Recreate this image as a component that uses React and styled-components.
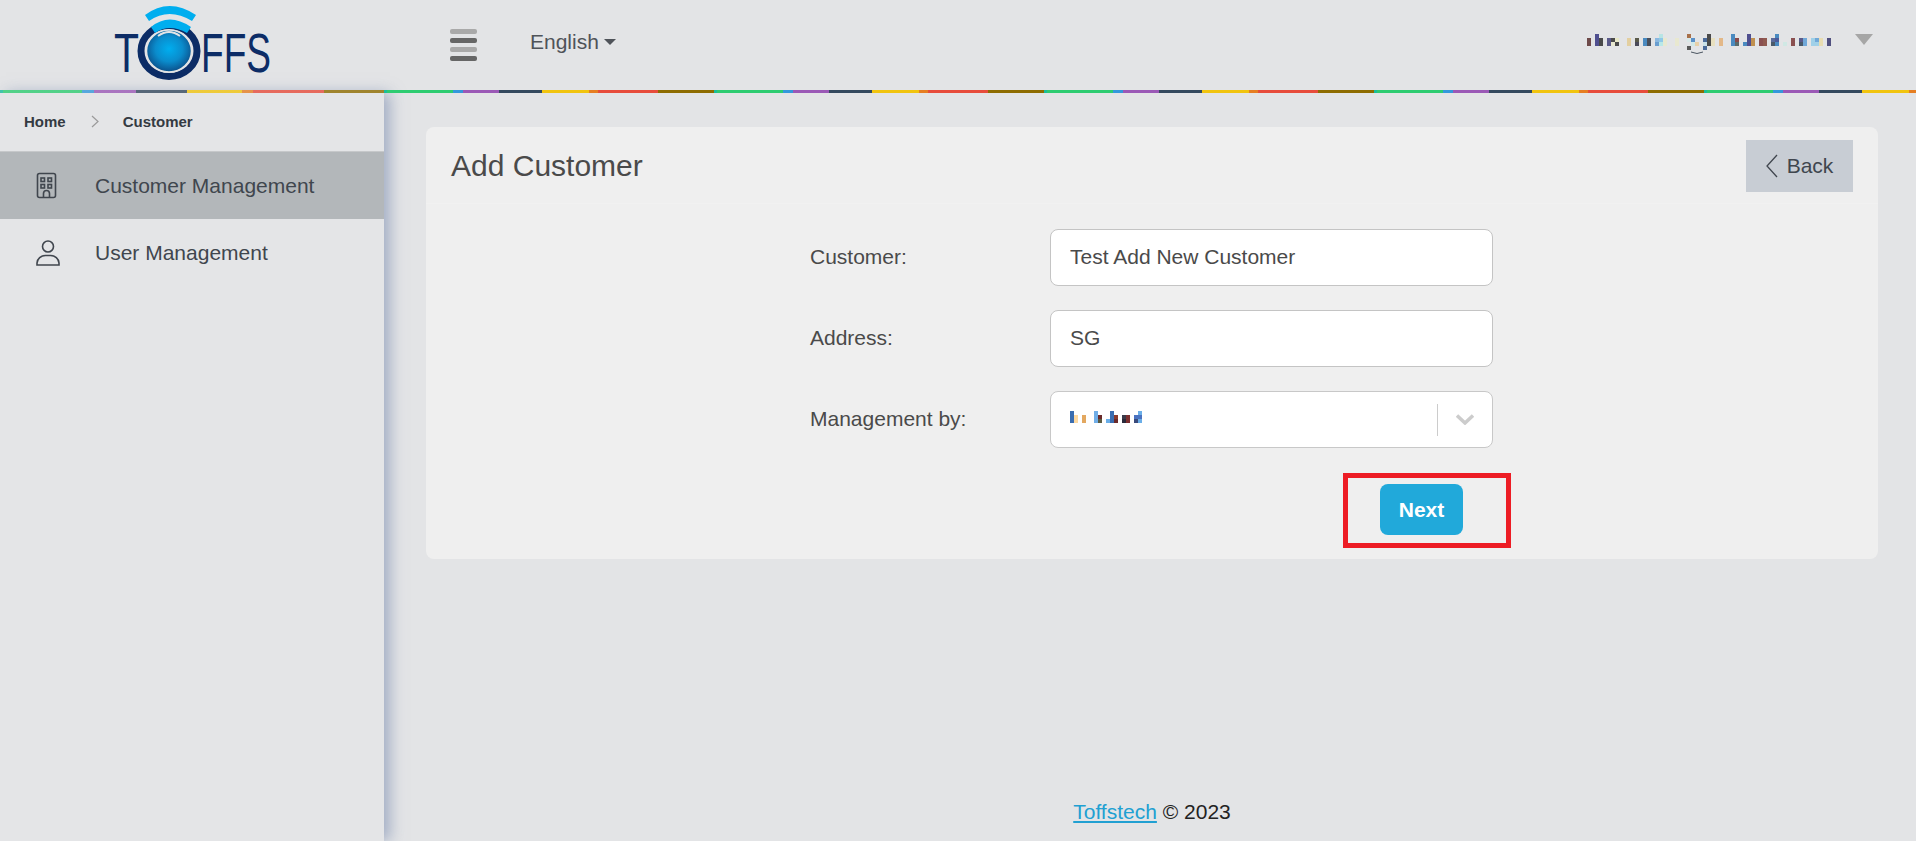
import styled, { createGlobalStyle } from 'styled-components'

const GlobalStyle = createGlobalStyle`
   html, body { margin: 0; padding: 0; height: 100%; }
   body {
      background: #e3e4e6;
      color: #4a4a4a;
      font-family: "Liberation Sans", Arial, sans-serif;
      font-size: 21px;
   }
   #root { height: 100%; }
`

const stripe = `linear-gradient(to right,
   #1abc9c 0 3px, #2ecc71 3px 69px, #3498db 69px 79px, #9b59b6 79px 115px,
   #34495e 115px 158px, #f1c40f 158px 205px, #e67e22 205px 214px,
   #e74c3c 214px 274px, #8e6c00 274px 330px)`

const brandStripe = `linear-gradient(to right,
   #1abc9c 0 3px, #2ecc71 3px 82px, #3498db 82px 94px, #9b59b6 94px 136px,
   #34495e 136px 187px, #f1c40f 187px 242px, #e67e22 242px 253px,
   #e74c3c 253px 324px, #8e6c00 324px 384px)`

const USER_CELLS = [
   [0, 1, '#6e4a4a'], [0, 2, '#6e4a4a'], [2, 0, '#4f4f8f'], [2, 1, '#4f4f8f'], [2, 2, '#4f4f8f'],
   [3, 1, '#4a4a4a'], [3, 2, '#4a4a4a'], [5, 1, '#5a5a8a'], [5, 2, '#5a5a8a'], [6, 1, '#4a4a4a'],
   [6, 2, '#e8e8d0'], [7, 1, '#e8e8c8'], [7, 2, '#4a4a4a'], [10, 1, '#e3cfa0'], [10, 2, '#e3cfa0'],
   [12, 1, '#5a5a4a'], [12, 2, '#4a4a5a'], [14, 1, '#4a8ac0'], [14, 2, '#4a8ac0'], [15, 1, '#4a4f5a'],
   [15, 2, '#4a4f5a'], [17, 1, '#8ab8e0'], [17, 2, '#6a9ed0'], [18, 0, '#b8e4e4'], [18, 1, '#90c8e8'],
   [18, 2, '#b8e8e8'], [19, 1, '#e8e8d0'], [19, 2, '#e8e8d0'], [22, 1, '#e8e8d0'], [22, 2, '#e8e8d0'],
   [25, 0, '#a8704a'], [25, 1, '#d8e8e8'], [25, 3, '#5a5a5a'], [26, 1, '#5a90c8'], [26, 2, '#d0e8e8'],
   [27, 2, '#e8d0a8'], [29, 1, '#4a6a9a'], [29, 2, '#c8e0e8'], [29, 3, '#4a6a9a'], [30, 0, '#4a4a4a'],
   [30, 1, '#4a4a4a'], [30, 2, '#4a4a4a'], [31, 1, '#e8e0c0'], [31, 2, '#e8e0c0'], [33, 1, '#e3b888'],
   [33, 2, '#e3b888'], [36, 0, '#4a8ac0'], [36, 1, '#4a8ac0'], [36, 2, '#4a8ac0'], [37, 1, '#8a4a4a'],
   [37, 2, '#5a6a6a'], [39, 2, '#4a8ac0'], [40, 0, '#4f4f8f'], [40, 1, '#4f4f8f'], [40, 2, '#4f4f8f'],
   [41, 1, '#c09050'], [41, 2, '#c09050'], [43, 1, '#8a5050'], [43, 2, '#8a5050'], [44, 1, '#905a50'],
   [44, 2, '#905a50'], [46, 1, '#5a6a9a'], [46, 2, '#4a5a6a'], [47, 0, '#4a8ac0'], [47, 1, '#4a5a9a'],
   [47, 2, '#4a8ac0'], [49, 2, '#d0e8e4'], [51, 1, '#8a5050'], [51, 2, '#8a5050'], [53, 1, '#5a5a8a'],
   [53, 2, '#4a5a6a'], [54, 1, '#70a8d8'], [54, 2, '#70a8d8'], [56, 1, '#a0d0e8'], [56, 2, '#a0d0e8'],
   [57, 1, '#70a8d8'], [57, 2, '#a0d0e8'], [58, 1, '#e8dcb0'], [58, 2, '#e8dcb0'], [60, 1, '#50507f'],
   [60, 2, '#50507f'],
]

const SELECT_CELLS = [
   [1, 0, '#3a6db0'], [1, 1, '#3a6db0'], [1, 2, '#3a6db0'], [2, 1, '#fdd8a0'], [2, 2, '#fdd8a0'],
   [4, 1, '#e3a860'], [4, 2, '#e3a860'], [7, 0, '#70aee8'], [7, 1, '#70aee8'], [7, 2, '#70aee8'],
   [8, 1, '#6a2a2a'], [8, 2, '#5a5a40'], [10, 2, '#6aaee8'], [11, 0, '#3a6db0'], [11, 1, '#3a6db0'],
   [11, 2, '#3a6db0'], [12, 1, '#8a3a2a'], [12, 2, '#6a2a2a'], [14, 1, '#3a3a4a'], [14, 2, '#2a2a3a'],
   [15, 1, '#7a2f2f'], [15, 2, '#7a2f2f'], [17, 1, '#4a72c0'], [17, 2, '#3a4a7a'], [18, 0, '#6aaee8'],
   [18, 1, '#4a72c0'], [18, 2, '#6aaee8'],
]

const Mosaic = ({ cells, width, height, children }) => (
   <svg width={width} height={height} viewBox={`0 0 ${width} ${height}`}>
      {cells.map(([x, y, fill]) => (
         <rect key={`${x}-${y}`} x={x * 4} y={y * 4} width='4' height='4' fill={fill} />
      ))}
      {children}
   </svg>
)

const Logo = () => (
   <svg width='230' height='90' viewBox='0 0 230 90'>
      <defs>
         <radialGradient id='lens' cx='50%' cy='45%' r='55%'>
            <stop offset='0%' stopColor='#00aeef' />
            <stop offset='55%' stopColor='#0a8ccc' />
            <stop offset='100%' stopColor='#0b4f8a' />
         </radialGradient>
      </defs>
      <text x='14' y='72' fontFamily='Liberation Sans' fontSize='55' fill='#0c2c66' textLength='25' lengthAdjust='spacingAndGlyphs'>T</text>
      <text x='101' y='72' fontFamily='Liberation Sans' fontSize='55' fill='#0c2c66' textLength='70' lengthAdjust='spacingAndGlyphs'>FFS</text>
      <ellipse cx='69' cy='51' rx='28' ry='25.5' fill='none' stroke='#0c2c66' strokeWidth='7' />
      <ellipse cx='69' cy='51' rx='22.5' ry='21' fill='url(#lens)' stroke='#e3e4e6' strokeWidth='1.5' />
      <path d='M51 27 Q69 12 91 27 L87 33 Q69 23 55 33 Z' fill='#00aeef' />
      <path d='M45 15 Q69 -3 96 15 L92 21 Q69 7 49 21 Z' fill='#00aeef' />
      <path d='M58 36 Q69 28 80 36' fill='none' stroke='#e3e4e6' strokeWidth='2' />
   </svg>
)

const BuildingIcon = () => (
   <svg width='22' height='28' viewBox='0 0 22 28' fill='none' stroke='#40464e' strokeWidth='1.6'>
      <rect x='1.5' y='1.5' width='18' height='24' rx='2' />
      <rect x='5' y='6' width='3.5' height='3.5' />
      <rect x='12' y='6' width='3.5' height='3.5' />
      <rect x='5' y='12.5' width='3.5' height='3.5' />
      <rect x='12' y='12.5' width='3.5' height='3.5' />
      <path d='M7.5 25.5 V21.5 a3 3 0 0 1 6 0 V25.5' />
   </svg>
)

const UserIcon = () => (
   <svg width='24' height='28' viewBox='0 0 24 28' fill='none' stroke='#40464e' strokeWidth='1.6'>
      <circle cx='12' cy='7.5' r='5.5' />
      <path d='M1 26 V24 a8.5 8 0 0 1 8.5 -7.5 h5 a8.5 8 0 0 1 8.5 7.5 V26 Z' />
   </svg>
)

const App = () => {
   return (
      <Page>
         <GlobalStyle />
         <Header>
            <Brand><Logo /></Brand>
            <Burger aria-label='menu'>
               <i /><i /><i /><i />
            </Burger>
            <Language>English<Caret /></Language>
            <UserArea>
               <Mosaic cells={USER_CELLS} width={244} height={20}>
                  <path d='M104 18 Q110 21 116 18' fill='none' stroke='#4a5560' strokeWidth='1' />
               </Mosaic>
               <UserCaret />
            </UserArea>
         </Header>
         <Stripes>
            <BrandStripe />
            <MainStripe />
         </Stripes>
         <Body>
            <Sidebar>
               <Breadcrumb>
                  <span>Home</span>
                  <Crumb>
                     <svg width='8' height='13' viewBox='0 0 8 13' fill='none' stroke='#9a9a9a' strokeWidth='1.2'>
                        <path d='M1 1 L7 6.5 L1 12' />
                     </svg>
                  </Crumb>
                  <span>Customer</span>
               </Breadcrumb>
               <NavItem $active>
                  <NavIcon><BuildingIcon /></NavIcon>
                  Customer Management
               </NavItem>
               <NavItem>
                  <NavIcon><UserIcon /></NavIcon>
                  User Management
               </NavItem>
            </Sidebar>
            <Main>
               <Card>
                  <CardHeader>
                     <Title>Add Customer</Title>
                     <BackButton>
                        <svg width='12' height='24' viewBox='0 0 12 24' fill='none' stroke='#40464e' strokeWidth='1.3'>
                           <path d='M11 1 L1 12 L11 23' />
                        </svg>
                        Back
                     </BackButton>
                  </CardHeader>
                  <Form>
                     <Row>
                        <Label>Customer:</Label>
                        <Input readOnly value='Test Add New Customer' />
                     </Row>
                     <Row>
                        <Label>Address:</Label>
                        <Input readOnly value='SG' />
                     </Row>
                     <Row>
                        <Label>Management by:</Label>
                        <SelectBox>
                           <SelectValue>
                              <Mosaic cells={SELECT_CELLS} width={80} height={12} />
                           </SelectValue>
                           <SelectArrow>
                              <svg width='18' height='11' viewBox='0 0 18 11' fill='none' stroke='#cccccc' strokeWidth='3.5'>
                                 <path d='M1 1.5 L9 9 L17 1.5' />
                              </svg>
                           </SelectArrow>
                        </SelectBox>
                     </Row>
                     <Actions>
                        <NextButton>Next</NextButton>
                        <Highlight />
                     </Actions>
                  </Form>
               </Card>
               <Footer><FooterLink href='#'>Toffstech</FooterLink> © 2023</Footer>
            </Main>
         </Body>
      </Page>
   )
}

export default App

const Page = styled.div`
   height: 100vh;
   display: flex;
   flex-direction: column;
   overflow: hidden;
`

const Header = styled.header`
   height: 90px;
   flex: none;
   display: flex;
   align-items: center;
`

const Brand = styled.div`
   width: 384px;
   height: 90px;
   flex: none;
   padding-left: 100px;
   box-sizing: border-box;
   svg { display: block; }
`

const Burger = styled.div`
   width: 27px;
   margin-left: 66px;
   display: flex;
   flex-direction: column;
   gap: 4px;
   i {
      display: block;
      height: 5px;
      border-radius: 2px;
      background: #a9a9a9;
   }
   i:nth-child(even) { background: #666; }
`

const Language = styled.div`
   margin: -7px 0 0 53px;
   display: flex;
   align-items: center;
   gap: 5px;
   color: #4f5359;
`

const Caret = styled.span`
   width: 0;
   height: 0;
   border-left: 6px solid transparent;
   border-right: 6px solid transparent;
   border-top: 6px solid #4f5359;
`

const UserArea = styled.div`
   margin: -2px 43px 0 auto;
   display: flex;
   align-items: flex-start;
   gap: 24px;
   height: 20px;
   svg { display: block; }
`

const UserCaret = styled.span`
   width: 0;
   height: 0;
   border-left: 9px solid transparent;
   border-right: 9px solid transparent;
   border-top: 11px solid #a6a6a6;
`

const Stripes = styled.div`
   flex: none;
   height: 3px;
   display: flex;
   position: relative;
   z-index: 1;
   background: #e3e4e6;
`

const BrandStripe = styled.div`
   width: 384px;
   flex: none;
   background: ${brandStripe};
   opacity: 0.8;
`

const MainStripe = styled.div`
   flex: 1;
   background: ${stripe};
   background-size: 330px 100%;
`

const Body = styled.div`
   flex: 1;
   display: flex;
   min-height: 0;
`

const Sidebar = styled.aside`
   width: 384px;
   flex: none;
   background: #e4e5e7;
   box-shadow: 6px 0 14px rgba(120, 138, 175, 0.6);
   position: relative;
   color: #40464e;
`

const Breadcrumb = styled.div`
   height: 58px;
   box-sizing: border-box;
   padding: 0 0 1px 24px;
   display: flex;
   align-items: center;
   font-size: 15px;
   font-weight: 700;
   color: #343a42;
`

const Crumb = styled.span`
   margin: 0 24px 0 25px;
   display: flex;
`

const NavItem = styled.div`
   height: 68px;
   display: flex;
   align-items: center;
   background: ${(p) => (p.$active ? '#b3b7ba' : 'transparent')};
   border-top: ${(p) => (p.$active ? '1px solid #c6c8ca' : 'none')};
   box-sizing: border-box;
`

const NavIcon = styled.span`
   width: 95px;
   flex: none;
   padding-left: 36px;
   box-sizing: border-box;
   display: flex;
`

const Main = styled.main`
   flex: 1;
   min-width: 0;
   padding: 34px 38px 0 42px;
   display: flex;
   flex-direction: column;
`

const Card = styled.section`
   background: #efefef;
   border-radius: 8px;
`

const CardHeader = styled.div`
   height: 77px;
   box-sizing: border-box;
   padding: 13px 25px 0 25px;
   display: flex;
   justify-content: space-between;
   align-items: flex-start;
   border-bottom: 1px solid #f1f1f1;
`

const Title = styled.h2`
   margin: 9px 0 0;
   font-size: 30px;
   font-weight: 400;
   line-height: 34px;
   color: #4a4a4a;
`

const BackButton = styled.button`
   width: 107px;
   height: 52px;
   border: 0;
   padding: 0;
   display: flex;
   align-items: center;
   justify-content: center;
   gap: 9px;
   background: #c8cdd4;
   color: #40464e;
   font: inherit;
`

const Form = styled.form`
   padding: 25px 0 24px 384px;
   display: flex;
   flex-direction: column;
   gap: 24px;
`

const Row = styled.div`
   display: flex;
   align-items: center;
`

const Label = styled.label`
   width: 240px;
   flex: none;
   padding-bottom: 2px;
   color: #4a4a4a;
`

const Input = styled.input`
   width: 443px;
   height: 57px;
   box-sizing: border-box;
   border: 1px solid #c4c4c4;
   border-radius: 8px;
   background: #fff;
   padding: 0 19px 2px;
   font: inherit;
   color: #4a4a4a;
   outline: none;
`

const SelectBox = styled.div`
   width: 443px;
   height: 57px;
   box-sizing: border-box;
   border: 1px solid #c8c8c8;
   border-radius: 8px;
   background: #fff;
   display: flex;
   align-items: center;
`

const SelectValue = styled.div`
   flex: 1;
   padding: 0 0 6px 15px;
   svg { display: block; }
`

const SelectArrow = styled.div`
   width: 55px;
   height: 32px;
   border-left: 1px solid #cccccc;
   box-sizing: border-box;
   display: flex;
   align-items: center;
   justify-content: center;
`

const Actions = styled.div`
   position: relative;
   padding-left: 570px;
   margin-top: 12px;
   width: 83px;
`

const NextButton = styled.button`
   width: 83px;
   height: 51px;
   border: 0;
   border-radius: 8px;
   background: #21a9da;
   color: #fff;
   font: 700 21px "Liberation Sans", Arial, sans-serif;
`

const Highlight = styled.div`
   position: absolute;
   left: 533px;
   top: -11px;
   width: 168px;
   height: 75px;
   box-sizing: border-box;
   border: 5px solid #ed1c24;
   pointer-events: none;
`

const Footer = styled.footer`
   margin-top: auto;
   height: 41px;
   text-align: center;
   color: #222;
`

const FooterLink = styled.a`
   color: #21a0d2;
   text-decoration: underline;
`
